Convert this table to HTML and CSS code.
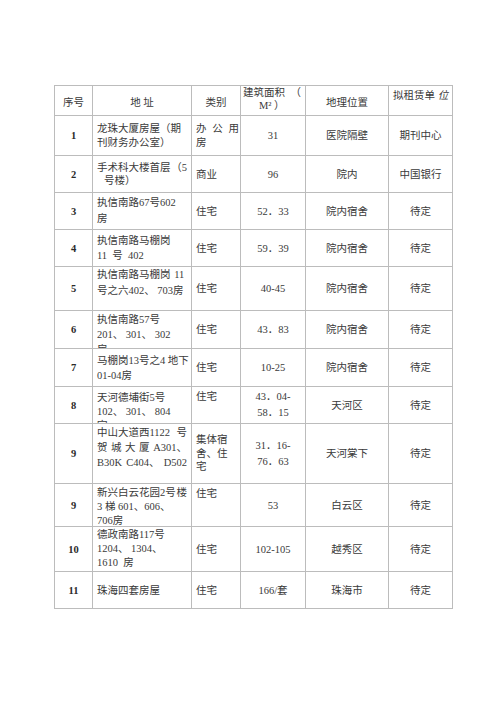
FILE: index.html
```html
<!DOCTYPE html>
<html lang="zh">
<head>
<meta charset="utf-8">
<title>拟租赁房屋一览表</title>
<link rel="stylesheet" href="styles.css">
</head>
<body>
<div class="page">
  <div class="sheet">
    <!-- header -->
    <div class="c ctr hd">序号</div>
    <div class="c ctr hd">地&nbsp;址</div>
    <div class="c ctr hd">类别</div>
    <div class="c hd area-h">
      <span class="l j"><span>建筑面积</span><span>（</span></span>
      <span class="l m2">M²&nbsp;）</span>
    </div>
    <div class="c ctr hd">地理位置</div>
    <div class="c hd rent-h"><span class="l">拟租赁单&nbsp;<i>位</i></span></div>

    <!-- 1 -->
    <div class="c num">1</div>
    <div class="c addr tight"><span class="l">龙珠大厦房屋（期</span><span class="l">刊财务办公室）</span></div>
    <div class="c cat tight"><span class="l j"><span>办</span><span>公</span><span>用</span></span><span class="l">房</span></div>
    <div class="c ctr">31</div>
    <div class="c ctr">医院隔壁</div>
    <div class="c ctr">期刊中心</div>

    <!-- 2 -->
    <div class="c num">2</div>
    <div class="c addr tight"><span class="l j"><span>手术科大楼首层</span><span>（5</span></span><span class="l ind">号楼）</span></div>
    <div class="c cat">商业</div>
    <div class="c ctr">96</div>
    <div class="c ctr">院内</div>
    <div class="c ctr">中国银行</div>

    <!-- 3 -->
    <div class="c num">3</div>
    <div class="c addr loose"><span class="l">执信南路67号602</span><span class="l">房</span></div>
    <div class="c cat">住宅</div>
    <div class="c ctr">52．33</div>
    <div class="c ctr">院内宿舍</div>
    <div class="c ctr">待定</div>

    <!-- 4 -->
    <div class="c num">4</div>
    <div class="c addr"><span class="l">执信南路马棚岗</span><span class="l">11&nbsp;&nbsp;号&nbsp;&nbsp;402</span></div>
    <div class="c cat">住宅</div>
    <div class="c ctr">59．39</div>
    <div class="c ctr">院内宿舍</div>
    <div class="c ctr">待定</div>

    <!-- 5 -->
    <div class="c num">5</div>
    <div class="c addr top loose"><span class="l j"><span>执信南路马棚岗</span><span>11&nbsp;</span></span><span class="l">号之六402、&nbsp;703房</span></div>
    <div class="c cat">住宅</div>
    <div class="c ctr">40-45</div>
    <div class="c ctr">院内宿舍</div>
    <div class="c ctr">待定</div>

    <!-- 6 -->
    <div class="c num">6</div>
    <div class="c addr top p1"><span class="l">执信南路57号</span><span class="l">201、&nbsp;301、&nbsp;302</span><span class="l">房</span></div>
    <div class="c cat">住宅</div>
    <div class="c ctr">43．83</div>
    <div class="c ctr">院内宿舍</div>
    <div class="c ctr">待定</div>

    <!-- 7 -->
    <div class="c num">7</div>
    <div class="c addr"><span class="l">马棚岗13号之4&nbsp;地下</span><span class="l">01-04房</span></div>
    <div class="c cat">住宅</div>
    <div class="c ctr">10-25</div>
    <div class="c ctr">院内宿舍</div>
    <div class="c ctr">待定</div>

    <!-- 8 -->
    <div class="c num">8</div>
    <div class="c addr top p4 mid"><span class="l">天河德埔街5号</span><span class="l">102、&nbsp;301、&nbsp;804</span><span class="l">室</span></div>
    <div class="c cat top p2">住宅</div>
    <div class="c ctr loose">43．04-<br>58．15</div>
    <div class="c ctr">天河区</div>
    <div class="c ctr">待定</div>

    <!-- 9 -->
    <div class="c num">9</div>
    <div class="c addr top p1"><span class="l j"><span>中山大道西1122</span><span>号</span></span><span class="l j"><span>贺</span><span>城</span><span>大</span><span>厦</span><span>A301、</span></span><span class="l j"><span>B30K</span><span>C404、</span><span>D502</span></span></div>
    <div class="c cat tight"><span class="l">集体宿</span><span class="l">舍、住</span><span class="l">宅</span></div>
    <div class="c ctr loose">31．16-<br>76．63</div>
    <div class="c ctr">天河棠下</div>
    <div class="c ctr">待定</div>

    <!-- 9 -->
    <div class="c num">9</div>
    <div class="c addr top p2 mid"><span class="l j"><span>新兴白云花园2号</span><span>楼</span></span><span class="l">3&nbsp;梯&nbsp;601、606、</span><span class="l">706房</span></div>
    <div class="c cat top p2">住宅</div>
    <div class="c ctr">53</div>
    <div class="c ctr">白云区</div>
    <div class="c ctr">待定</div>

    <!-- 10 -->
    <div class="c num">10</div>
    <div class="c addr mid"><span class="l">德政南路117号</span><span class="l">1204、&nbsp;1304、</span><span class="l">1610&nbsp;&nbsp;房</span></div>
    <div class="c cat">住宅</div>
    <div class="c ctr">102-105</div>
    <div class="c ctr">越秀区</div>
    <div class="c ctr">待定</div>

    <!-- 11 -->
    <div class="c num">11</div>
    <div class="c addr">珠海四套房屋</div>
    <div class="c cat">住宅</div>
    <div class="c ctr">166/套</div>
    <div class="c ctr">珠海市</div>
    <div class="c ctr">待定</div>
  </div>
</div>
</body>
</html>
```

FILE: styles.css
```css
html, body {
  margin: 0;
  padding: 0;
  background: #ffffff;
}

.page {
  padding: 85px 0 0 54px;
}

.sheet {
  display: grid;
  grid-template-columns: 37px 98px 48px 64px 82px 63px;
  grid-template-rows: 29px 39px 36px 36px 36px 43px 37px 37px 36px 59px 42px 44px 36px;
  gap: 1px;
  width: max-content;
  background: #bcbcbc;
  border: 1px solid #bcbcbc;
  font-family: "Liberation Serif", "Noto Sans CJK SC", serif;
  font-size: 10.5px;
  line-height: 15px;
  color: #3a3a3a;
}

.c {
  background: #ffffff;
  overflow: hidden;
  display: flex;
  flex-direction: column;
  justify-content: center;
  white-space: nowrap;
}

.l {
  display: block;
}

.j {
  display: flex;
  justify-content: space-between;
}

.ctr {
  align-items: center;
  text-align: center;
}

.num {
  align-items: center;
  font-weight: bold;
  color: #2a2a2a;
}

.addr {
  padding: 0 4px;
}

.cat {
  padding: 0 1px 0 4px;
}

.top {
  justify-content: flex-start;
}

.tight {
  line-height: 13.5px;
}

.mid {
  line-height: 14px;
}

.loose {
  line-height: 16px;
}

.p1 { padding-top: 1px; }
.p2 { padding-top: 2px; }
.p4 { padding-top: 4px; }

.ind {
  padding-left: 7px;
}

.hd {
  padding-top: 3px;
}

.area-h {
  justify-content: flex-start;
  padding: 0 4px 0 2px;
  line-height: 13px;
}

.area-h .m2 {
  padding-left: 16px;
}

.rent-h {
  justify-content: flex-start;
  padding: 2px 0 0 4px;
}

.rent-h i {
  font-style: italic;
}
```
